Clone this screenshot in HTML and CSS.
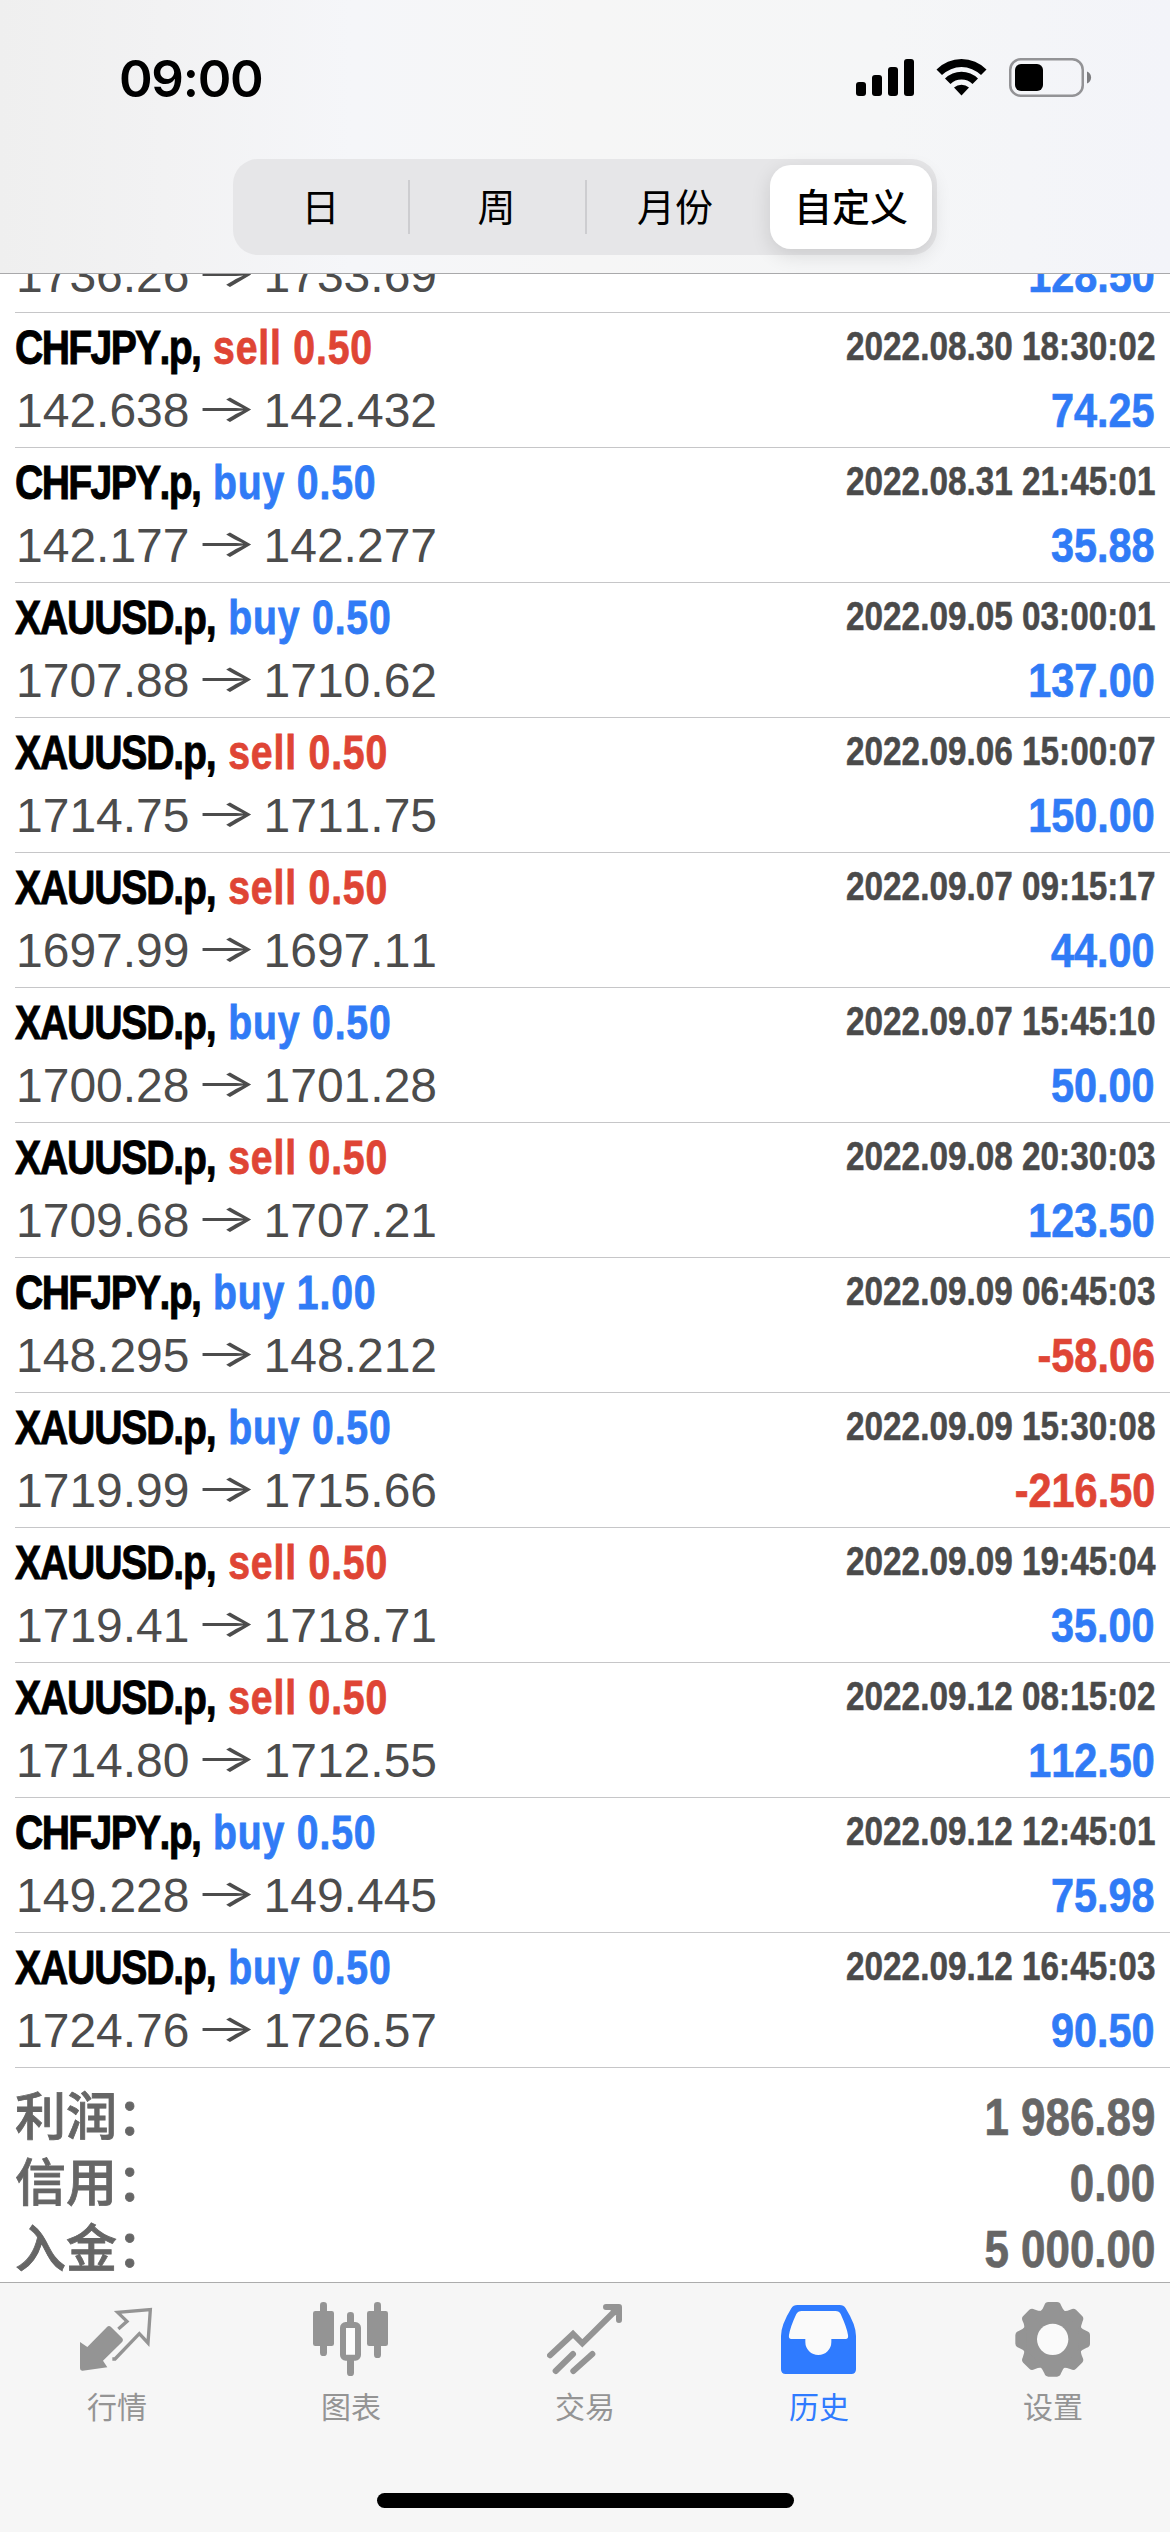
FILE: index.html
```html
<!DOCTYPE html>
<html lang="zh-CN">
<head>
<meta charset="utf-8">
<title>历史</title>
<link rel="stylesheet" href="styles.css">
</head>
<body>
<div class="screen">
  <header class="top">
    <div class="status">
      <span class="clock">09:00</span>
      <svg class="status-icons" viewBox="0 0 240 44" width="240" height="44">
        <rect x="1" y="26" width="10" height="14" rx="3"/>
        <rect x="17" y="19" width="10" height="21" rx="3"/>
        <rect x="33" y="11" width="10" height="29" rx="3"/>
        <rect x="49" y="3" width="10" height="37" rx="3"/>
        <path d="M81.500 13.500A35 35 0 0 1 131.500 13.500L126 19A28 28 0 0 0 87 19ZM90 22.500A23.500 23.500 0 0 1 123 22.500L117.500 28A16 16 0 0 0 95.500 28ZM99 31.500A11.500 11.500 0 0 1 114 31.500L106.500 39.500Z"/>
        <rect x="155.250" y="3.250" width="72.500" height="36.500" rx="10.500" fill="none" stroke="#939396" stroke-width="2.500"/>
        <rect x="160" y="8" width="28" height="27" rx="6"/>
        <path d="M232 15.500C237.500 17.500 237.500 25.500 232 27.500Z" fill="#7d7d80"/>
      </svg>
    </div>
    <nav class="segments">
      <span class="segment">日</span>
      <span class="segment divided">周</span>
      <span class="segment divided">月份</span>
      <span class="segment selected">自定义</span>
    </nav>
  </header>

  <main class="history">
    <article class="deal scrolled"><div class="line"><span class="prices">1736.26<i>→</i>1733.69</span><span class="profit">128.50</span></div></article>
    <article class="deal"><div class="line"><span class="name chf">CHFJPY.p,<b class="sell">sell 0.50</b></span><time>2022.08.30 18:30:02</time></div><div class="line"><span class="prices">142.638<i>→</i>142.432</span><span class="profit">74.25</span></div></article>
    <article class="deal"><div class="line"><span class="name chf">CHFJPY.p,<b class="buy">buy 0.50</b></span><time>2022.08.31 21:45:01</time></div><div class="line"><span class="prices">142.177<i>→</i>142.277</span><span class="profit">35.88</span></div></article>
    <article class="deal"><div class="line"><span class="name">XAUUSD.p,<b class="buy">buy 0.50</b></span><time>2022.09.05 03:00:01</time></div><div class="line"><span class="prices">1707.88<i>→</i>1710.62</span><span class="profit">137.00</span></div></article>
    <article class="deal"><div class="line"><span class="name">XAUUSD.p,<b class="sell">sell 0.50</b></span><time>2022.09.06 15:00:07</time></div><div class="line"><span class="prices">1714.75<i>→</i>1711.75</span><span class="profit">150.00</span></div></article>
    <article class="deal"><div class="line"><span class="name">XAUUSD.p,<b class="sell">sell 0.50</b></span><time>2022.09.07 09:15:17</time></div><div class="line"><span class="prices">1697.99<i>→</i>1697.11</span><span class="profit">44.00</span></div></article>
    <article class="deal"><div class="line"><span class="name">XAUUSD.p,<b class="buy">buy 0.50</b></span><time>2022.09.07 15:45:10</time></div><div class="line"><span class="prices">1700.28<i>→</i>1701.28</span><span class="profit">50.00</span></div></article>
    <article class="deal"><div class="line"><span class="name">XAUUSD.p,<b class="sell">sell 0.50</b></span><time>2022.09.08 20:30:03</time></div><div class="line"><span class="prices">1709.68<i>→</i>1707.21</span><span class="profit">123.50</span></div></article>
    <article class="deal"><div class="line"><span class="name chf">CHFJPY.p,<b class="buy">buy 1.00</b></span><time>2022.09.09 06:45:03</time></div><div class="line"><span class="prices">148.295<i>→</i>148.212</span><span class="profit loss">-58.06</span></div></article>
    <article class="deal"><div class="line"><span class="name">XAUUSD.p,<b class="buy">buy 0.50</b></span><time>2022.09.09 15:30:08</time></div><div class="line"><span class="prices">1719.99<i>→</i>1715.66</span><span class="profit loss">-216.50</span></div></article>
    <article class="deal"><div class="line"><span class="name">XAUUSD.p,<b class="sell">sell 0.50</b></span><time>2022.09.09 19:45:04</time></div><div class="line"><span class="prices">1719.41<i>→</i>1718.71</span><span class="profit">35.00</span></div></article>
    <article class="deal"><div class="line"><span class="name">XAUUSD.p,<b class="sell">sell 0.50</b></span><time>2022.09.12 08:15:02</time></div><div class="line"><span class="prices">1714.80<i>→</i>1712.55</span><span class="profit">112.50</span></div></article>
    <article class="deal"><div class="line"><span class="name chf">CHFJPY.p,<b class="buy">buy 0.50</b></span><time>2022.09.12 12:45:01</time></div><div class="line"><span class="prices">149.228<i>→</i>149.445</span><span class="profit">75.98</span></div></article>
    <article class="deal"><div class="line"><span class="name">XAUUSD.p,<b class="buy">buy 0.50</b></span><time>2022.09.12 16:45:03</time></div><div class="line"><span class="prices">1724.76<i>→</i>1726.57</span><span class="profit">90.50</span></div></article>
    <dl class="totals">
      <div class="total"><dt>利润：</dt><dd>1 986.89</dd></div>
      <div class="total"><dt>信用：</dt><dd>0.00</dd></div>
      <div class="total"><dt>入金：</dt><dd>5 000.00</dd></div>
    </dl>
  </main>

  <footer class="bottom">
    <nav class="tabs">
      <a class="tab">
        <svg viewBox="237 93 228 228" width="76" height="76">
          <path d="M240 216L262 231L321 171Q327 165 333 171L367 205Q371 210 367 215L309 272L322 292L248 302Q240 303 240 295Z"/>
          <path d="M355 177L381 154L353 127L451 119L444 219L418 191L345 267H337" fill="none" stroke="currentColor" stroke-width="10"/>
        </svg>
        <span>行情</span>
      </a>
      <a class="tab">
        <svg viewBox="939 93 228 228" width="76" height="76">
          <rect x="960" y="96" width="21" height="162" rx="10"/><rect x="939" y="123" width="63" height="105" rx="7"/>
          <rect x="1122" y="96" width="21" height="168" rx="10"/><rect x="1101" y="123" width="63" height="105" rx="7"/>
          <rect x="1041" y="126" width="21" height="40" rx="10"/><rect x="1041" y="260" width="21" height="58" rx="10"/>
          <rect x="1029" y="165" width="45" height="98" rx="8" fill="#fcfcfc" stroke="currentColor" stroke-width="18"/>
        </svg>
        <span>图表</span>
      </a>
      <a class="tab">
        <svg viewBox="291 93 228 228" width="76" height="76" fill="none" stroke="currentColor" stroke-width="18" stroke-linecap="round" stroke-linejoin="round">
          <path d="M300 256L369 192L397 220L501 117" stroke-linejoin="miter"/>
          <path d="M468 111H507V150M485 111H507V132L497 125Z"/>
          <path d="M317 303L369 252M370 303L427 252"/>
        </svg>
        <span>交易</span>
      </a>
      <a class="tab active">
        <svg viewBox="993 93 228 228" width="76" height="76">
          <path d="M1042 105H1169Q1181 105 1187 115Q1218 165 1218 198V298Q1218 312 1204 312H1007Q993 312 993 298V198Q993 165 1024 115Q1030 105 1042 105Z"/>
          <path d="M1055 123H1156Q1168 123 1172 132Q1191 174 1194 195Q1196 207 1187 207H1144V216A39 39 0 0 1 1066 216V207H1024Q1015 207 1017 195Q1021 170 1039 132Q1044 123 1055 123Z" fill="#fafafa"/>
        </svg>
        <span>历史</span>
      </a>
      <a class="tab">
        <svg viewBox="735 93 228 228" width="76" height="76">
          <defs><path id="tooth" d="M806 130Q820 118 823 106Q826 96 835 96H861Q870 96 873 106Q877 118 890 130Z"/></defs>
          <circle cx="848" cy="208" r="90"/>
          <use href="#tooth"/><use href="#tooth" transform="rotate(45 848 208)"/><use href="#tooth" transform="rotate(90 848 208)"/><use href="#tooth" transform="rotate(135 848 208)"/><use href="#tooth" transform="rotate(180 848 208)"/><use href="#tooth" transform="rotate(225 848 208)"/><use href="#tooth" transform="rotate(270 848 208)"/><use href="#tooth" transform="rotate(315 848 208)"/>
          <circle cx="848" cy="208" r="47" fill="#fafafa"/>
        </svg>
        <span>设置</span>
      </a>
    </nav>
    <div class="home-indicator"></div>
  </footer>
</div>
</body>
</html>
```
FILE: styles.css
```css
* { box-sizing: border-box; margin: 0; padding: 0; }
body { background: #fff; }
.screen {
  width: 1170px; height: 2532px; overflow: hidden;
  display: flex; flex-direction: column;
  font-family: "Liberation Sans", "Noto Sans CJK SC", sans-serif;
}

/* status bar and period switch */
.top {
  flex: none; height: 274px; border-bottom: 1px solid #a9a9ab;
  background: linear-gradient(90deg, #efefef 0, #f2f2f3 14%, #f5f6f9 30%, #f6f6f6 50%, #f5f6f7 75%, #f3f4f9 100%);
  display: flex; flex-direction: column; align-items: center;
}
.status {
  width: 100%; height: 159px; padding: 56px 75px 0 119px;
  display: flex; justify-content: space-between; align-items: flex-start;
}
.clock { font: 600 51px/45px Inter, sans-serif; letter-spacing: -1.3px; }
.segments {
  width: 704px; height: 96px; padding: 6px 5px 6px 0; border-radius: 25px; background: #e6e6e8;
  display: grid; grid-template-columns: 175px 177px 180px 167px;
}
.segment {
  display: flex; align-items: center; justify-content: center;
  padding-bottom: 5px;
  font: 400 38px/58px "Noto Sans CJK SC", sans-serif;
}
.divided { background: linear-gradient(#cdcdd0, #cdcdd0) 0 50% / 2px 54px no-repeat; }
.selected { margin-left: 5px; background: #fff; border-radius: 21px; font-weight: 500; box-shadow: 0 6px 20px rgba(0, 0, 0, .12); }

/* closed deals */
.history { flex: 1; min-height: 0; padding-left: 15px; display: flex; flex-direction: column; justify-content: flex-end; overflow: hidden; }
.deal { flex: none; height: 135px; border-bottom: 1px solid #c6c6c8; padding: 3px 15px 0 0; }
.scrolled { height: 69px; padding-top: 0; }
.line { display: flex; justify-content: space-between; align-items: baseline; height: 63px; line-height: 63px; white-space: pre; }
/* condensed bold face for symbols, dates and amounts */
.name, time, .profit, dd { font-weight: 700; font-kerning: none; transform: scaleX(.845); transform-origin: right; }
.name { font-size: 49px; letter-spacing: -1.5px; transform: scaleX(.8); transform-origin: left; -webkit-text-stroke: .9px; }
.name.chf { letter-spacing: -2.1px; }
.name b, .name.chf b { letter-spacing: 1px; margin-left: 16px; -webkit-text-stroke: .8px; }
.sell, .loss { color: #df4535; }
.buy { color: #307bf6; }
time { font-size: 40px; color: #4a4a4a; transform: translateY(-4px) scaleX(.833); -webkit-text-stroke: .5px; }
.prices { padding-left: 1px; font-size: 48px; color: #4c4c4c; font-kerning: none; }
.prices i { display: inline-block; width: 74px; text-align: center; font: 400 38px/1 Inter, sans-serif; transform: translate(-1px, -5px) scaleX(1.75); }
.profit { font-size: 49px; color: #307bf6; -webkit-text-stroke: .7px; }
.profit.loss { color: #df4535; }

.totals { flex: none; height: 214px; padding: 12px 15px 0 0; }
.total { display: flex; justify-content: space-between; align-items: baseline; height: 66px; line-height: 66px; color: #666; }
dt { font: 500 51px/66px "Noto Sans CJK SC", sans-serif; -webkit-text-stroke: .8px; }
dd { font-size: 52px; -webkit-text-stroke: .7px; }

/* tab bar */
.bottom { flex: none; height: 250px; border-top: 1px solid #acacac; background: #f6f6f6; display: flex; flex-direction: column; align-items: center; justify-content: space-between; padding-bottom: 24px; }
.tabs { width: 100%; display: grid; grid-template-columns: repeat(5, 1fr); padding-top: 18px; }
.tab { display: flex; flex-direction: column; align-items: center; gap: 8px; color: #949494; }
.tab svg:not([fill]) { fill: currentColor; }
.tab span { font: 400 30px/40px "Noto Sans CJK SC", sans-serif; }
.active { color: #2f7bff; }
.home-indicator { width: 417px; height: 15px; border-radius: 8px; background: #000; }
```
